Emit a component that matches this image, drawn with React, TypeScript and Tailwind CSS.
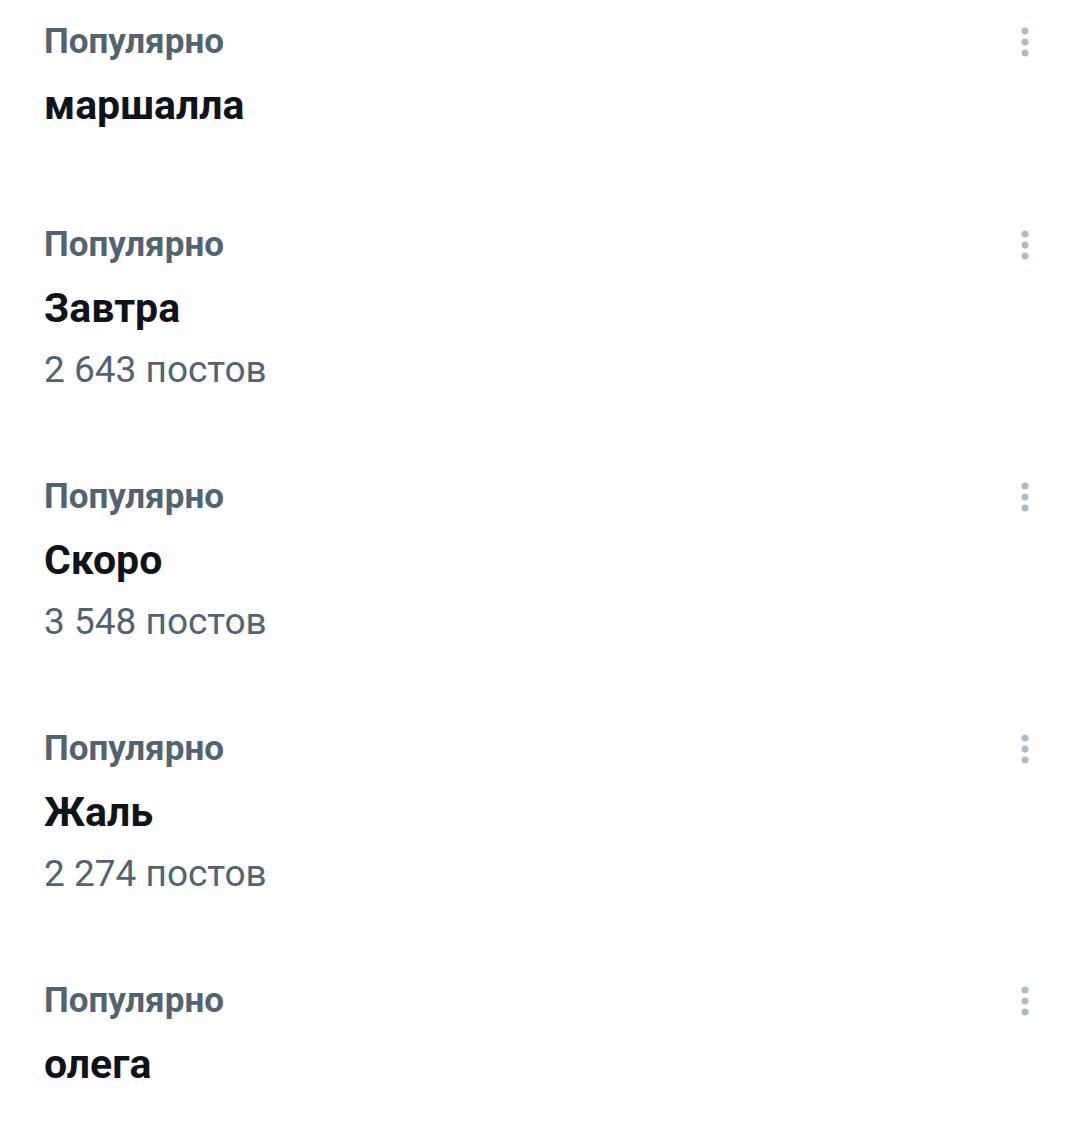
const trends = [
  { title: 'маршалла', count: null },
  { title: 'Завтра', count: '2 643 постов' },
  { title: 'Скоро', count: '3 548 постов' },
  { title: 'Жаль', count: '2 274 постов' },
  { title: 'олега', count: null },
];

function MoreDots() {
  return (
    <svg width="10" height="34" viewBox="0 0 10 34" className="text-[#aebbc4]">
      <circle cx="5" cy="6" r="3.5" fill="currentColor" />
      <circle cx="5" cy="17" r="3.5" fill="currentColor" />
      <circle cx="5" cy="28" r="3.5" fill="currentColor" />
    </svg>
  );
}

export default function App() {
  return (
    <div className="min-h-screen bg-white font-['Roboto',sans-serif]">
      {trends.map((t, i) => (
        <div
          key={i}
          className={`pl-[44px] pr-[45px] pt-5 ${t.count ? 'pb-[61px]' : 'pb-[72px]'}`}
        >
          {/* Label row */}
          <div className="flex items-center justify-between h-[44px]">
            <span className="text-[35px] font-bold text-[#536471] leading-[44px]">Популярно</span>
            <MoreDots />
          </div>

          <div className="mt-[15px] text-[41px] font-bold text-[#0f1419] leading-[52px]">{t.title}</div>

          {t.count && (
            <div className="mt-3 text-[37px] text-[#536471] leading-[48px]">{t.count}</div>
          )}
        </div>
      ))}
    </div>
  );
}
